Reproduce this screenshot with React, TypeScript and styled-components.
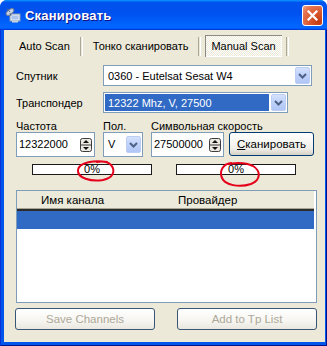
import React from 'react';
import styled, { createGlobalStyle } from 'styled-components';

const GlobalStyle = createGlobalStyle`
    html, body {
        margin: 0;
        padding: 0;
        background: #ffffff;
    }
    body {
        font-family: 'Liberation Sans', Arial, sans-serif;
        font-size: 11px;
        color: #000000;
    }
`;

const Window = styled.div`
    width: 327px;
    height: 346px;
    display: flex;
    flex-direction: column;
    border-radius: 7px 7px 0 0;
    overflow: hidden;
    background: #0055ea;
`;

const TitleBar = styled.div`
    height: 30px;
    flex-shrink: 0;
    display: flex;
    align-items: center;
    padding: 0 4px 0 5px;
    box-sizing: border-box;
    background: linear-gradient(
        180deg,
        #0997ff 0%,
        #0053ee 8%,
        #0050ee 40%,
        #0066ff 88%,
        #0066ff 93%,
        #005bff 95%,
        #003dd7 96%,
        #003dd7 100%
    );
`;

const TitleText = styled.span`
    flex: 1;
    margin-left: 4px;
    color: #ffffff;
    font-weight: bold;
    font-size: 13px;
    letter-spacing: 0.2px;
    text-shadow: 1px 1px #0f1089;
`;

const CloseButton = styled.div`
    width: 21px;
    height: 21px;
    box-sizing: border-box;
    align-self: flex-start;
    margin-top: 5px;
    border: 1px solid #ffffff;
    border-radius: 3px;
    background: radial-gradient(circle at 85% 85%, #c23a12 0%, #da5a30 45%, #e57450 75%, #f0a488 100%);
    display: flex;
    align-items: center;
    justify-content: center;
`;

const Frame = styled.div`
    flex: 1;
    display: flex;
    padding: 0 4px 4px 4px;
    box-shadow: inset 1px 0 #0831d9, inset -1px -1px #00138c;
`;

const Client = styled.div`
    flex: 1;
    background: #ece9d8;
    display: flex;
    flex-direction: column;
    padding: 0 8px 0 12px;
`;

const TabBar = styled.div`
    display: flex;
    align-items: center;
    height: 22px;
    margin: 5px 0 0 -3px;
`;

const Tab = styled.div<{ $active?: boolean }>`
    height: 22px;
    box-sizing: border-box;
    padding: 0 6px;
    display: flex;
    align-items: center;
    white-space: nowrap;
    background: ${(p) =>
        p.$active ? 'repeating-conic-gradient(#ece9d8 0 25%, #ffffff 0 50%) 0 0 / 2px 2px' : 'transparent'};
    box-shadow: ${(p) => (p.$active ? 'inset 1px 1px #8c8a80, inset -1px -1px #ffffff' : 'none')};
`;

const TabSep = styled.div`
    width: 1px;
    height: 19px;
    margin: 0 4px;
    border-left: 1px solid #aca899;
    border-right: 1px solid #ffffff;
`;

const FieldRow = styled.div<{ $top: number }>`
    display: flex;
    align-items: center;
    height: 21px;
    margin-top: ${(p) => p.$top}px;
`;

const FieldLabel = styled.div`
    width: 87px;
    flex-shrink: 0;
`;

const Combo = styled.div<{ $width: number; $height?: number }>`
    width: ${(p) => p.$width}px;
    height: ${(p) => p.$height ?? 21}px;
    box-sizing: border-box;
    border: 1px solid #7f9db9;
    background: #ffffff;
    display: flex;
    align-items: center;
    padding: 1px;
`;

const ComboText = styled.div<{ $selected?: boolean }>`
    flex: 1;
    align-self: stretch;
    display: flex;
    align-items: center;
    padding-left: 3px;
    margin-right: 2px;
    white-space: nowrap;
    overflow: hidden;
    background: ${(p) => (p.$selected ? '#316ac5' : 'transparent')};
    color: ${(p) => (p.$selected ? '#ffffff' : '#000000')};
`;

const ArrowBox = styled.div<{ $h?: number }>`
    width: 15px;
    height: ${(p) => p.$h ?? 17}px;
    box-sizing: border-box;
    flex-shrink: 0;
    border: 1px solid #bccdf3;
    border-radius: 2px;
    background: linear-gradient(180deg, #d5e2fd 0%, #c0d2fb 45%, #b1c6f5 100%);
    display: flex;
    align-items: center;
    justify-content: center;
`;

const ParamGrid = styled.div`
    display: grid;
    grid-template-columns: 79px 40px 73px 85px;
    grid-template-rows: 11px 25px;
    column-gap: 8px;
    margin-top: 8px;
    line-height: 11px;
`;

const ParamLabel = styled.div`
    white-space: nowrap;
`;

const Edit = styled.div`
    height: 25px;
    box-sizing: border-box;
    border: 1px solid #7f9db9;
    background: #ffffff;
    display: flex;
    align-items: center;
    padding: 0 2px 0 2px;
`;

const EditText = styled.div`
    flex: 1;
    white-space: nowrap;
`;

const PushButton = styled.div<{ $disabled?: boolean; $width: number }>`
    width: ${(p) => p.$width}px;
    height: ${(p) => (p.$disabled ? 22 : 24)}px;
    box-sizing: border-box;
    border: 1px solid ${(p) => (p.$disabled ? '#3a5677' : '#003c74')};
    border-radius: 3px;
    background: ${(p) =>
        p.$disabled
            ? 'linear-gradient(180deg, #ffffff 0%, #f6f5f0 60%, #e9e7df 100%)'
            : 'linear-gradient(180deg, #ffffff 0%, #f0efea 70%, #d6d0c5 100%)'};
    color: ${(p) => (p.$disabled ? '#aca899' : '#000000')};
    display: flex;
    align-items: center;
    justify-content: center;
    font-size: ${(p) => (p.$disabled ? '11.5px' : '11.5px')};
    white-space: nowrap;
`;

const ScanButton = styled(PushButton)`
    margin-left: -3px;
`;

const ProgressRow = styled.div`
    display: flex;
    gap: 24px;
    margin: 7px 0 0 16px;
`;

const ProgressBar = styled.div`
    position: relative;
    width: 120px;
    height: 11px;
    box-sizing: border-box;
    border: 1px solid #1a1a1a;
    background: #ffffff;
    display: flex;
    align-items: center;
    justify-content: center;
    line-height: 9px;
`;

const Scribble = styled.svg`
    position: absolute;
    left: 0;
    top: -8px;
    overflow: visible;
    pointer-events: none;
`;

const ListView = styled.div`
    height: 113px;
    box-sizing: border-box;
    margin-top: 15px;
    border: 1px solid #7f9db9;
    background: #ffffff;
    padding-right: 2px;
    display: flex;
    flex-direction: column;
`;

const ListHeader = styled.div`
    height: 20px;
    flex-shrink: 0;
    box-sizing: border-box;
    display: flex;
    align-items: center;
    background: #ebeadb;
    border-bottom: 2px solid #2c2c2a;
    box-shadow: inset 0 -1px #a7a699;
    font-size: 11.5px;
`;

const HeaderCell = styled.div`
    width: 137px;
    padding-left: 24px;
    box-sizing: border-box;
    white-space: nowrap;
`;

const ListRow = styled.div<{ $selected?: boolean }>`
    height: 18px;
    background: ${(p) => (p.$selected ? '#316ac5' : 'transparent')};
`;

const ButtonRow = styled.div`
    display: flex;
    justify-content: space-between;
    margin: 5px 0 0 -1px;
`;

function ChevronIcon() {
    return (
        <svg width="9" height="6" viewBox="0 0 9 6">
            <path d="M1 1 L4.5 4.5 L8 1" fill="none" stroke="#4d6185" strokeWidth="2" />
        </svg>
    );
}

function ComboArrow({ h }: { h?: number }) {
    return (
        <ArrowBox $h={h}>
            <ChevronIcon />
        </ArrowBox>
    );
}

function Spinner() {
    return (
        <svg width="12" height="14" viewBox="0 0 12 14">
            <rect x="0.5" y="0.5" width="11" height="13" rx="2" fill="#ebe9e1" stroke="#3c3c3c" />
            <line x1="1" y1="7" x2="11" y2="7" stroke="#3c3c3c" />
            <path d="M3 5 L6 2 L9 5 Z" fill="#111" />
            <path d="M3 9 L6 12 L9 9 Z" fill="#111" />
        </svg>
    );
}

function DishIcon() {
    return (
        <svg width="16" height="16" viewBox="0 0 16 16">
            <rect x="5" y="7" width="10" height="7" fill="#e8eef7" stroke="#8a9bb5" />
            <rect x="6.5" y="8.5" width="7" height="4" fill="#a9c3ea" />
            <rect x="7" y="14" width="6" height="1.5" fill="#c9d3e2" />
            <ellipse cx="5" cy="5" rx="4.5" ry="2.4" transform="rotate(-40 5 5)" fill="#c7d2e3" stroke="#6f7f99" />
            <line x1="5" y1="5" x2="2" y2="1.5" stroke="#5a6a88" />
            <line x1="5" y1="6" x2="6" y2="9" stroke="#5a6a88" />
        </svg>
    );
}

function CloseIcon() {
    return (
        <svg width="11" height="11" viewBox="0 0 11 11">
            <path d="M1.5 1.5 L9.5 9.5 M9.5 1.5 L1.5 9.5" stroke="#ffffff" strokeWidth="2.2" strokeLinecap="square" />
        </svg>
    );
}

export default function App() {
    return (
        <>
            <GlobalStyle />
            <Window>
                <TitleBar>
                    <DishIcon />
                    <TitleText>Сканировать</TitleText>
                    <CloseButton>
                        <CloseIcon />
                    </CloseButton>
                </TitleBar>
                <Frame>
                    <Client>
                        <TabBar>
                            <Tab>Auto Scan</Tab>
                            <TabSep />
                            <Tab>Тонко сканировать</Tab>
                            <TabSep />
                            <Tab $active>Manual Scan</Tab>
                            <TabSep />
                        </TabBar>

                        <FieldRow $top={8}>
                            <FieldLabel>Спутник</FieldLabel>
                            <Combo $width={209}>
                                <ComboText>0360 - Eutelsat Sesat W4</ComboText>
                                <ComboArrow />
                            </Combo>
                        </FieldRow>
                        <FieldRow $top={6}>
                            <FieldLabel>Транспондер</FieldLabel>
                            <Combo $width={185}>
                                <ComboText $selected>12322 Mhz, V, 27500</ComboText>
                                <ComboArrow />
                            </Combo>
                        </FieldRow>

                        <ParamGrid>
                            <ParamLabel>Частота</ParamLabel>
                            <ParamLabel>Пол.</ParamLabel>
                            <ParamLabel>Символьная скорость</ParamLabel>
                            <div />
                            <Edit>
                                <EditText>12322000</EditText>
                                <Spinner />
                            </Edit>
                            <Combo $width={40} $height={25}>
                                <ComboText>V</ComboText>
                                <ComboArrow h={17} />
                            </Combo>
                            <Edit>
                                <EditText>27500000</EditText>
                                <Spinner />
                            </Edit>
                            <ScanButton $width={85}>
                                <span>
                                    <u>С</u>канировать
                                </span>
                            </ScanButton>
                        </ParamGrid>

                        <ProgressRow>
                            <ProgressBar>
                                0%
                                <Scribble width="120" height="30" viewBox="0 -8 120 30">
                                    <path
                                        d="M74 -3 C62 -5, 46 -3, 45 5 C44 13, 58 17, 70 15 C80 13, 83 6, 78 0 C75 -3, 70 -4, 64 -3"
                                        fill="none"
                                        stroke="#e5001c"
                                        strokeWidth="2"
                                        strokeLinecap="round"
                                    />
                                </Scribble>
                            </ProgressBar>
                            <ProgressBar>
                                0%
                                <Scribble width="120" height="30" viewBox="0 -8 120 30">
                                    <path
                                        d="M54 -2 C46 -1, 42 6, 45 13 C48 20, 62 23, 74 19 C84 15, 84 6, 76 1 C70 -2, 62 -3, 52 -1"
                                        fill="none"
                                        stroke="#e5001c"
                                        strokeWidth="2"
                                        strokeLinecap="round"
                                    />
                                </Scribble>
                            </ProgressBar>
                        </ProgressRow>

                        <ListView>
                            <ListHeader>
                                <HeaderCell>Имя канала</HeaderCell>
                                <HeaderCell>Провайдер</HeaderCell>
                            </ListHeader>
                            <ListRow $selected />
                        </ListView>

                        <ButtonRow>
                            <PushButton $disabled $width={140}>
                                Save Channels
                            </PushButton>
                            <PushButton $disabled $width={140}>
                                Add to Tp List
                            </PushButton>
                        </ButtonRow>
                    </Client>
                </Frame>
            </Window>
        </>
    );
}
